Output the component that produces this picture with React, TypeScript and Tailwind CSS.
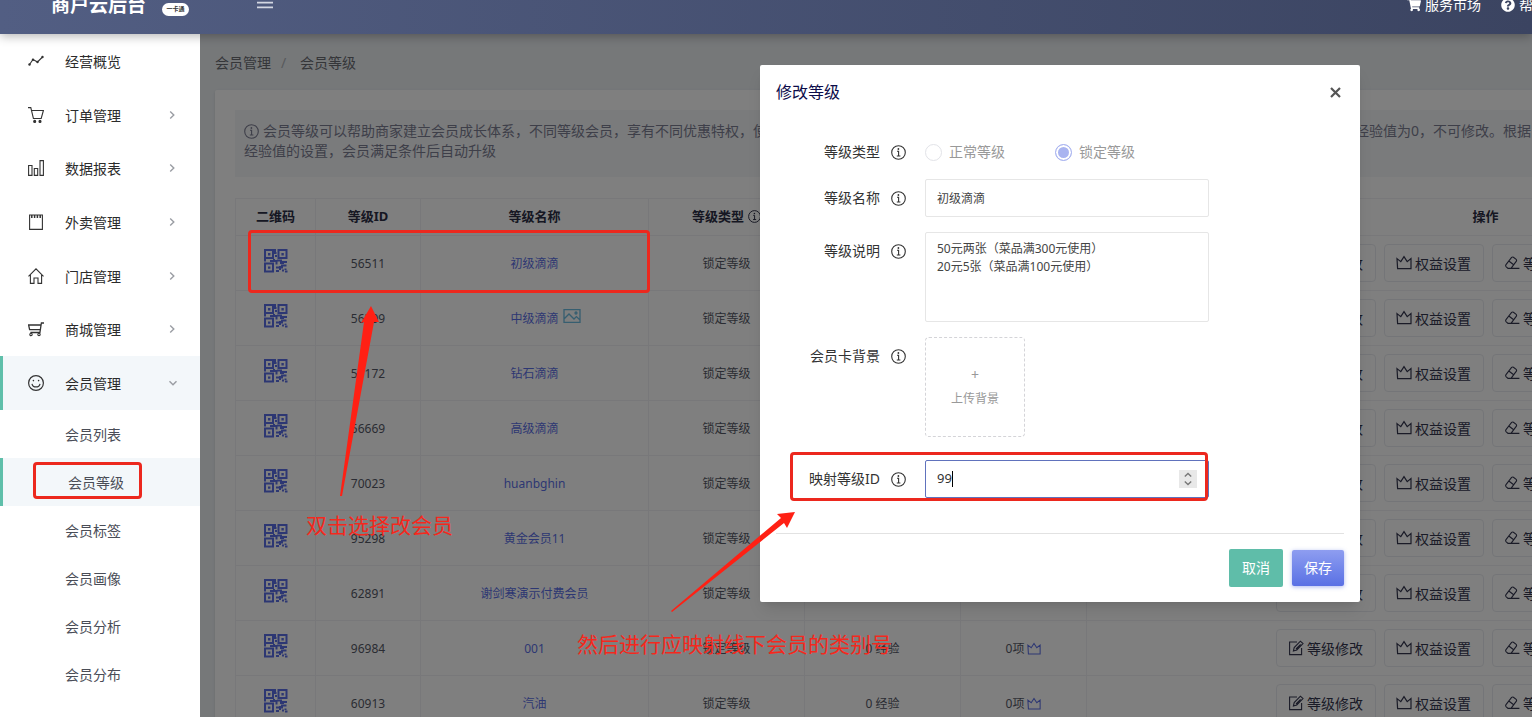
import React, { useState } from 'react';
import { FaShoppingCart, FaQuestionCircle } from 'react-icons/fa';

const menuItems = [
  { name: '经营概览', icon: 'trend', arrow: false },
  { name: '订单管理', icon: 'cart', arrow: true },
  { name: '数据报表', icon: 'chart', arrow: true },
  { name: '外卖管理', icon: 'note', arrow: true },
  { name: '门店管理', icon: 'home', arrow: true },
  { name: '商城管理', icon: 'trolley', arrow: true },
  { name: '会员管理', icon: 'smile', arrow: true },
];

const subItems = ['会员列表', '会员等级', '会员标签', '会员画像', '会员分析', '会员分布'];

const levels = [
  { id: '56511', name: '初级滴滴' },
  { id: '56509', name: '中级滴滴', picture: true },
  { id: '57172', name: '钻石滴滴' },
  { id: '56669', name: '高级滴滴' },
  { id: '70023', name: 'huanbghin' },
  { id: '95298', name: '黄金会员11' },
  { id: '62891', name: '谢剑寒演示付费会员' },
  { id: '96984', name: '001' },
  { id: '60913', name: '汽油' },
];

function MenuIcon({ name }: { name: string }) {
  return (
    <svg className="w-4 h-4 shrink-0 text-[#333]" viewBox="0 0 16 16" fill="none" stroke="currentColor" strokeWidth="1.1">
      {name === 'trend' && (
        <>
          <path d="M1.5 11.5L5 6.5L9.5 9L14.5 4" />
          <g fill="currentColor" stroke="none">
            <circle cx="1.5" cy="11.5" r="1.2" />
            <circle cx="5" cy="6.7" r="1.2" />
            <circle cx="9.5" cy="9" r="1.2" />
            <circle cx="14.5" cy="4" r="1.2" />
          </g>
        </>
      )}
      {name === 'cart' && (
        <>
          <path d="M0 .6H2.8L5.4 11.5H13.2L15.4 3.5H3.6" />
          <circle cx="6.7" cy="14.4" r="1" fill="currentColor" />
          <circle cx="12" cy="14.4" r="1" fill="currentColor" />
        </>
      )}
      {name === 'chart' && <path d="M.6 5.5H4V15.4H.6ZM6.3 8.5H9.7V15.4H6.3ZM12 .6H15.4V15.4H12Z" />}
      {name === 'note' && (
        <>
          <path d="M1.6 1H14.4V15.4H1.6Z" />
          <path d="M3.8 1V4M6.6 1V4M9.4 1V4M12.2 1V4" strokeWidth="1.5" />
        </>
      )}
      {name === 'home' && <path d="M.5 8.3L8 .8L15.5 8.3M2.4 7V15.4H6V10H10V15.4H13.6V7" />}
      {name === 'trolley' && (
        <>
          <path d="M16 2H13.4L11.9 11.5H2.4M.6 4H13L12.4 8.6H1.6Z" strokeWidth="1.3" />
          <circle cx="3" cy="13.4" r="1.2" />
          <circle cx="11" cy="13.4" r="1.2" />
        </>
      )}
      {name === 'smile' && (
        <>
          <circle cx="8" cy="8" r="7.4" strokeWidth="1.2" />
          <path d="M4 8.8C4.8 13 11.2 13 12 8.8" strokeWidth="1.2" />
          <circle cx="5.4" cy="5.6" r=".8" fill="currentColor" stroke="none" />
          <circle cx="10.6" cy="5.6" r=".8" fill="currentColor" stroke="none" />
        </>
      )}
    </svg>
  );
}

function Chevron({ down }: { down?: boolean }) {
  return (
    <svg className="w-2 h-2 text-[#9a9da3]" viewBox="0 0 8 8" fill="none" stroke="currentColor" strokeWidth="1.4">
      {down ? <path d="M.5 2.2L4 5.8L7.5 2.2" /> : <path d="M1.2 .5L4.8 4L1.2 7.5" />}
    </svg>
  );
}

function InfoIcon({ className }: { className: string }) {
  return (
    <svg className={className} viewBox="0 0 15 15" fill="none" stroke="currentColor" strokeWidth="1.1">
      <circle cx="7.5" cy="7.5" r="6.8" />
      <path d="M6 6.2H7.6V11M5.8 11H9.4" />
      <circle cx="7.4" cy="4" r=".9" fill="currentColor" stroke="none" />
    </svg>
  );
}

function QrCode() {
  return (
    <svg className="w-6 h-6 text-[#5b6fe6]" viewBox="0 0 24 24" fill="none" stroke="currentColor" strokeWidth="2">
      <path d="M1 1H9V9H1ZM14.5 1H22.5V9H14.5ZM1 14.5H9V22.5H1Z" />
      <path d="M4 4H6.4V6.4H4ZM17.4 4H19.8V6.4H17.4ZM4 17.4H6.4V19.8H4Z" fill="currentColor" stroke="none" />
      <path d="M11 0V4H12.5M12 6V8M1 9.5V12.5M6 12H12.5V15.5M10 11V10M13 11.5H17V15M12 18.5H18V16.5H22.5M20 13H23M19 12V15M12 22H15M16 17V21M18 21.5H20M21.5 19.5V21M21 22.5H23.5" />
    </svg>
  );
}

function Crown({ className }: { className: string }) {
  return (
    <svg className={className} viewBox="0 0 16 16" fill="none" stroke="currentColor" strokeWidth="1.2">
      <path d="M1 3.6L4.8 6.6L8 1.6L11.2 6.6L15 3.6V13.6H1.6Z" />
    </svg>
  );
}

function EditIcon() {
  return (
    <svg className="w-4 h-4" viewBox="0 0 16 16" fill="none" stroke="currentColor" strokeWidth="1.1">
      <path d="M9 2H1.6V14.6H13.6V8" />
      <path d="M5.4 11L6.2 7.6L12.4 1.2L15 3.6L8.8 10ZM8 9L12.6 4.4" />
    </svg>
  );
}

function EraserIcon() {
  return (
    <svg className="w-4 h-4" viewBox="0 0 16 16" fill="none" stroke="currentColor" strokeWidth="1.1">
      <path d="M2 9.6L7.6 2.4Q8.4 1.6 9.4 2.2L12.2 4.4Q13 5.2 12.4 6.2L7 13.4H4L2 11.6Q1.2 10.6 2 9.6ZM4.8 6L10 10M7 13.4H15.4" />
    </svg>
  );
}

function Header() {
  return (
    <header className="relative z-10 h-[58px] -mt-6 shrink-0 flex items-center text-white bg-gradient-to-r from-[#525e83] to-[#3b4461] shadow-[0_2px_10px_rgba(0,0,0,0.3)]">
      <div className="w-[200px] shrink-0 flex items-center pl-[51px]">
        <h1 className="text-[19px] leading-6 font-bold whitespace-nowrap">商户云后台</h1>
        <span className="ml-4 mt-2 w-[27px] h-[13px] rounded-full bg-white text-[#333] text-[6px] leading-[13px] font-bold text-center whitespace-nowrap">
          一卡通
        </span>
      </div>
      <button type="button" aria-label="菜单" className="ml-[57px]">
        <svg className="w-4 h-4 text-[#d3d7e2]" viewBox="0 0 16 16" stroke="currentColor" strokeWidth="1.6">
          <path d="M0 .8H16M0 5.6H16M0 10.4H16" />
        </svg>
      </button>
      <nav className="ml-auto flex items-center text-sm whitespace-nowrap">
        <a href="#market" className="flex items-center mr-5">
          <FaShoppingCart className="w-[14px] h-[14px] mr-1" />
          服务市场
        </a>
        <a href="#help" className="flex items-center w-[31px] overflow-hidden">
          <FaQuestionCircle className="w-[14px] h-[14px] mr-1 shrink-0" />
          帮助中心
        </a>
      </nav>
    </header>
  );
}

function Sidebar() {
  return (
    <aside className="w-[200px] shrink-0 bg-white text-sm text-[#2b2b2b]">
      <ul className="h-[376px] flex flex-col">
        {menuItems.map((item) => {
          const active = item.name === '会员管理';
          return (
            <li key={item.name} className="flex-1">
              <a
                href="#menu"
                className={`h-full flex items-center border-l-[3px] pl-[25px] pr-[23px] ${
                  active ? 'bg-[#f3f7fa] border-[#5fbfaa]' : 'border-transparent'
                }`}
              >
                <MenuIcon name={item.icon} />
                <span className="ml-[21px] pt-0.5 flex-1">{item.name}</span>
                {item.arrow && <Chevron down={active} />}
              </a>
            </li>
          );
        })}
      </ul>
      <ul className="text-[#4a4d57]">
        {subItems.map((name) => (
          <li key={name}>
            <a
              href="#sub"
              className={`h-12 flex items-center pl-[65px] pt-0.5 ${
                name === '会员等级' ? 'bg-[#f3f7fa] border-l-[3px] border-[#5fbfaa]' : ''
              }`}
            >
              {name}
            </a>
          </li>
        ))}
      </ul>
    </aside>
  );
}

function ActionButton({ icon, text }: { icon: React.ReactNode; text: string }) {
  return (
    <button
      type="button"
      className="w-[100px] h-[38px] flex items-center justify-center gap-[3px] border border-[#e9ebf0] rounded text-sm text-[#34364f]"
    >
      {icon}
      <span className="pt-0.5">{text}</span>
    </button>
  );
}

function LevelTable() {
  return (
    <table className="table-fixed w-[1649px] border-collapse text-xs text-center text-[#555866] [&_td]:border [&_th]:border [&_td]:border-[#f0f1f4] [&_th]:border-[#f0f1f4]">
      <colgroup>
        <col className="w-[80px]" />
        <col className="w-[105px]" />
        <col className="w-[228px]" />
        <col className="w-[156px]" />
        <col className="w-[156px]" />
        <col className="w-[126px]" />
        <col className="w-[798px]" />
      </colgroup>
      <thead className="text-[13px] text-[#2c2e45]">
        <tr className="h-[37px]">
          <th>二维码</th>
          <th>等级ID</th>
          <th>等级名称</th>
          <th>
            <span className="flex items-center justify-center gap-1">
              等级类型
              <InfoIcon className="w-[13px] h-[13px]" />
            </span>
          </th>
          <th>所需经验</th>
          <th>会员权益</th>
          <th>操作</th>
        </tr>
      </thead>
      <tbody>
        {levels.map((level) => (
          <tr key={level.id} className="h-[55px] [&>td]:pt-0.5">
            <td>
              <div className="flex justify-center pb-1.5">
                <QrCode />
              </div>
            </td>
            <td>{level.id}</td>
            <td>
              <a href="#level" className="relative text-[#5b6fe6]">
                {level.name}
                {level.picture && (
                  <svg
                    className="absolute left-full -top-0.5 ml-1 w-[18px] h-4 text-[#6cbce0]"
                    viewBox="0 0 18 16"
                    fill="none"
                    stroke="currentColor"
                    strokeWidth="1.3"
                  >
                    <path d="M1 1.6H17V14.4H1ZM1 11L6 6L11 11L13.4 8.6L17 12" />
                    <circle cx="13" cy="5" r="1" />
                  </svg>
                )}
              </a>
            </td>
            <td>锁定等级</td>
            <td>0 经验</td>
            <td>
              <span className="flex items-center justify-center gap-[3px]">
                0项
                <Crown className="w-[14px] h-[14px] text-[#5b6fe6]" />
              </span>
            </td>
            <td>
              <div className="flex justify-center gap-2 pl-1 pb-0.5">
                <ActionButton icon={<EditIcon />} text="等级修改" />
                <ActionButton icon={<Crown className="w-4 h-4" />} text="权益设置" />
                <ActionButton icon={<EraserIcon />} text="等级清除" />
                <ActionButton icon={<EraserIcon />} text="等级删除" />
              </div>
            </td>
          </tr>
        ))}
      </tbody>
    </table>
  );
}

function FormRow({ label, htmlFor, children }: { label: string; htmlFor: string; children: React.ReactNode }) {
  return (
    <div className="flex items-start">
      <label htmlFor={htmlFor} className="w-[104px] h-[38px] flex items-center justify-end text-sm text-[#333]">
        {label}
      </label>
      <span className="h-[38px] flex items-center ml-[11px] mr-[19px]">
        <InfoIcon className="w-[15px] h-[15px] text-[#333]" />
      </span>
      {children}
    </div>
  );
}

const radioClass =
  'appearance-none w-[17px] h-[17px] rounded-full border border-[#e2e3e8] checked:border-[#a9b4f0] checked:bg-[#a9b4f0] checked:shadow-[inset_0_0_0_2px_#fff]';

function EditDialog() {
  const [name, setName] = useState('初级滴滴');
  const [remark, setRemark] = useState('50元两张（菜品满300元使用）\n20元5张（菜品满100元使用）');
  const [mapId, setMapId] = useState('99');

  return (
    <div role="dialog" aria-label="修改等级" className="w-[600px] bg-white rounded-xs shadow-lg px-4 pb-[15px]">
      <div className="h-[54px] flex items-center justify-between">
        <h2 className="text-base text-[#0c0c4a]">修改等级</h2>
        <button type="button" aria-label="关闭" className="mr-[3px]">
          <svg className="w-[11px] h-[11px] text-[#555]" viewBox="0 0 11 11" stroke="currentColor" strokeWidth="2.2">
            <path d="M1 1L10 10M10 1L1 10" />
          </svg>
        </button>
      </div>

      <form className="pt-[14px] pb-[35px]">
        <div className="mb-2">
          <FormRow label="等级类型" htmlFor="typeLock">
            <div className="h-[38px] flex items-center text-sm text-[#999]">
              <label className="w-[130px] flex items-center gap-[7px]">
                <input type="radio" name="type" disabled className={radioClass} />
                正常等级
              </label>
              <label className="flex items-center gap-[7px]">
                <input id="typeLock" type="radio" name="type" disabled defaultChecked className={radioClass} />
                锁定等级
              </label>
            </div>
          </FormRow>
        </div>
        <div className="flex flex-col gap-[15px]">
          <FormRow label="等级名称" htmlFor="levelName">
            <input
              id="levelName"
              value={name}
              onChange={(e) => setName(e.target.value)}
              className="w-[284px] h-[38px] border border-[#e6e6e6] rounded-xs px-[11px] text-xs text-[#444]"
            />
          </FormRow>
          <FormRow label="等级说明" htmlFor="levelRemark">
            <textarea
              id="levelRemark"
              value={remark}
              onChange={(e) => setRemark(e.target.value)}
              className="block w-[284px] h-[90px] border border-[#e6e6e6] rounded-xs px-[11px] py-[7px] text-xs leading-[18px] text-[#444] resize-none"
            />
          </FormRow>
          <FormRow label="会员卡背景" htmlFor="upload">
            <button
              id="upload"
              type="button"
              className="w-[100px] h-[100px] mb-2 flex flex-col items-center justify-center gap-2 border border-dashed border-[#d4d4d8] rounded text-xs text-[#999]"
            >
              <span className="text-sm leading-4">+</span>
              <span>上传背景</span>
            </button>
          </FormRow>
          <FormRow label="映射等级ID" htmlFor="mapId">
            <div className="relative flex items-center w-[284px] h-[38px] border border-[#6072bd] rounded-xs px-[11px]">
              <input
                id="mapId"
                value={mapId}
                inputMode="numeric"
                onChange={(e) => setMapId(e.target.value)}
                className="flex-1 min-w-0 text-[13px] text-[#333] outline-none"
              />
              <span className="absolute left-[26px] w-px h-4 bg-black" />
              <button
                type="button"
                aria-label="调整数值"
                onClick={() => setMapId(String(Number(mapId) + 1))}
                className="w-[18px] h-[18px] flex items-center justify-center bg-[#e8e8e8]"
              >
                <svg className="w-2 h-[14px] text-[#777]" viewBox="0 0 8 14" fill="none" stroke="currentColor" strokeWidth="1.4">
                  <path d="M.8 4.4L4 1.4L7.2 4.4M.8 9.6L4 12.6L7.2 9.6" />
                </svg>
              </button>
            </div>
          </FormRow>
        </div>
      </form>

      <div className="flex items-center justify-end gap-[9px] border-t border-[#e2e2e2] pt-[15px] text-sm text-white">
        <button type="button" className="w-[54px] h-[38px] rounded-xs bg-[#5fbda9]">
          取消
        </button>
        <button
          type="button"
          className="w-[52px] h-9 rounded-xs bg-gradient-to-b from-[#8e9df0] to-[#5a70e4] shadow-[0_1px_4px_rgba(90,112,228,0.5)]"
        >
          保存
        </button>
      </div>
    </div>
  );
}

// red marks that explain the steps, they float over the whole page
function Annotations() {
  return (
    <div className="absolute inset-0 z-30 pointer-events-none overflow-hidden text-[21px] leading-7 text-[#f5281d] whitespace-nowrap">
      <div className="absolute left-[33px] top-[462px] w-[109px] h-[37px] border-3 border-[#ec281e] rounded" />
      <div className="absolute left-[248px] top-[230px] w-[402px] h-[63px] border-3 border-[#ec281e] rounded" />
      <div className="absolute left-[790px] top-[452px] w-[418px] h-[49px] border-3 border-[#ec281e] rounded" />
      <svg className="absolute left-0 top-0 w-[900px] h-[650px]" viewBox="0 0 900 650" fill="#ff2014">
        <path d="M340 496L364 322L361 323L371 306L379 322L374 322L342 496Z" />
        <path d="M671 611L781 518L777 514L795 512L787 528L784 523L672 612Z" />
      </svg>
      <p className="absolute left-[306px] top-[511px]">双击选择改会员</p>
      <p className="absolute left-[577px] top-[630px]">然后进行应映射线下会员的类别号</p>
    </div>
  );
}

export default function App() {
  return (
    <div className="relative h-screen overflow-hidden flex flex-col font-['Noto_Sans','Noto_Sans_CJK_SC',sans-serif]">
      <Header />
      <div className="flex-1 min-h-0 flex">
        <Sidebar />
        <main className="relative flex-1 min-w-0 overflow-hidden bg-[#ecf0f3]">
          <nav className="h-14 flex items-center pl-[15px] pt-0.5 text-sm text-[#6a6c72]">
            <a href="#member">会员管理</a>
            <span className="w-[29px] pr-1 text-center text-[#b0b3b8]">/</span>
            <a href="#level">会员等级</a>
          </nav>
          <section className="ml-[15px] w-max p-5 bg-white rounded-xs shadow-sm">
            <div className="h-[67px] px-[9px] py-[11px] mb-[21px] bg-[#f5f6f9] text-sm leading-5 text-[#7c7e92] whitespace-nowrap">
              <p className="flex items-center">
                <InfoIcon className="w-[15px] h-[15px] mr-1" />
                会员等级可以帮助商家建立会员成长体系，不同等级会员，享有不同优惠特权，使会员更愿意到店消费，提升会员的活跃度与忠诚度。等级分为正常与锁定两种类型，初始等级的经验值为0，不可修改。根据
              </p>
              <p>经验值的设置，会员满足条件后自动升级</p>
            </div>
            <LevelTable />
          </section>
          <div className="absolute inset-0 z-20 flex items-start justify-end pt-[31px] pr-[172px] bg-black/50">
            <EditDialog />
          </div>
        </main>
      </div>
      <Annotations />
    </div>
  );
}
